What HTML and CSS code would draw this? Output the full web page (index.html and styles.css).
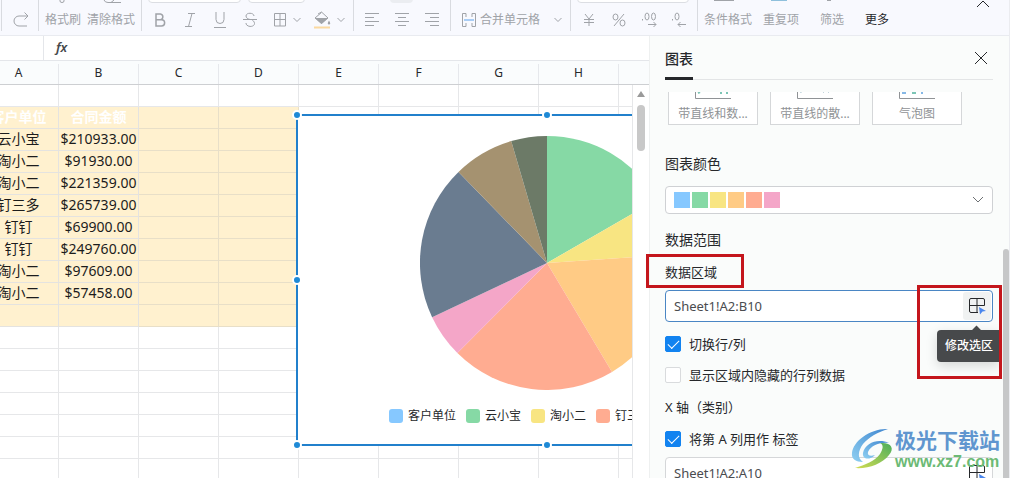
FILE: index.html
```
<!DOCTYPE html>
<html lang="zh-CN">
<head>
<meta charset="utf-8">
<title>图表</title>
<link rel="stylesheet" href="styles.css">
</head>
<body>
<div class="app">
  <header class="toolbar">
    <div class="group group-edge"></div>
    <div class="group group-redo">
      <div class="strip"></div>
      <div class="tools"><button class="tool" aria-label="重做"><svg width="18" height="16" viewBox="0 0 18 16"><path d="M15 14H7A5 5 0 0 1 7 4H16M12.500 .5L16 4L12.500 7.500"/></svg></button></div>
    </div>
    <div class="group group-format">
      <div class="strip strip-icons">
        <svg width="6" height="3" viewBox="0 0 6 3"><path d="M1 0V1A2 1.500 0 0 0 5 1V0"/></svg>
        <svg width="20" height="3" viewBox="0 0 20 3"><path d="M1 0Q2 2.500 5 2.500H18M8 2.500L11 0"/></svg>
      </div>
      <div class="tools labels"><button class="tool">格式刷</button><button class="tool">清除格式</button></div>
    </div>
    <div class="group group-font">
      <div class="strip strip-boxes"><span class="box box-font"></span><span class="box box-size"></span></div>
      <div class="tools">
        <button class="tool slot" aria-label="加粗"><svg width="12" height="14" viewBox="0 0 12 14"><path stroke-width="1.500" d="M2 1H6.500A2.900 2.900 0 0 1 6.500 6.700H2ZM2 6.700H7.500A3.100 3.100 0 0 1 7.500 13H2Z"/></svg></button>
        <button class="tool slot" aria-label="斜体"><svg width="12" height="14" viewBox="0 0 12 14"><path d="M4 .5H11M1 13.500H8M8 .5L4.500 13.500"/></svg></button>
        <button class="tool slot" aria-label="下划线"><svg width="14" height="16" viewBox="0 0 14 16"><path d="M3 0V7.500A4 4 0 0 0 11 7.500V0M1 15.500H13"/></svg></button>
        <button class="tool slot" aria-label="删除线"><svg width="14" height="16" viewBox="0 0 14 16"><path d="M11 4C11 .5 3 .2 3 4C3 6 5 7 7 7.500M0 7.500H14M3 11C3 15.500 11.500 15.500 11.500 11.500C11.500 9.500 10 8.500 8.500 7.500"/></svg></button>
        <button class="tool split" aria-label="边框"><svg width="14" height="14" viewBox="0 0 14 14"><path d="M1.500 .5H12.500V13H1.500ZM1.500 6.500H12.500M7 .5V13"/></svg><svg width="8" height="6" viewBox="0 0 8 6"><path d="M.5 1L4 4.500L7.500 1"/></svg></button>
        <button class="tool split" aria-label="填充颜色"><svg width="18" height="18" viewBox="0 0 18 18"><path d="M5 3L8.500 1L15 7L8.500 12.500L2 7L8.500 1.500"/><path class="solid" d="M2 7H15L8.500 13ZM16 9.500Q18.500 13.500 16 13.500T16 9.500"/><path class="amber" d="M1 16.500H17"/></svg><svg width="8" height="6" viewBox="0 0 8 6"><path d="M.5 1L4 4.500L7.500 1"/></svg></button>
      </div>
    </div>
    <div class="group group-align">
      <div class="strip strip-chip"><span class="chip"></span></div>
      <div class="tools">
        <button class="tool slot" aria-label="左对齐"><svg width="14" height="14" viewBox="0 0 14 14"><path d="M0 .5H14M0 4.500H9M0 8.500H14M0 12.500H9"/></svg></button>
        <button class="tool slot" aria-label="居中"><svg width="14" height="14" viewBox="0 0 14 14"><path d="M0 .5H14M3 4.500H11M0 8.500H14M3 12.500H11"/></svg></button>
        <button class="tool slot" aria-label="右对齐"><svg width="14" height="14" viewBox="0 0 14 14"><path d="M0 .5H14M5 4.500H14M0 8.500H14M5 12.500H14"/></svg></button>
      </div>
    </div>
    <div class="group group-merge">
      <div class="strip"></div>
      <div class="tools"><button class="tool merge"><svg width="14" height="14" viewBox="0 0 14 14"><path d="M4 .5H.5V4M.5 9.500V13.500H4V10M4 .5V4M10 4V.5H13.500V4M13.500 9.500V13.500H10V10M.5 4V10M13.500 4V10"/><path class="azure" d="M2 7H12"/></svg><span>合并单元格</span><svg class="far" width="8" height="6" viewBox="0 0 8 6"><path d="M.5 1L4 4.500L7.500 1"/></svg></button></div>
    </div>
    <div class="group group-number">
      <div class="strip strip-boxes"><span class="box box-number"></span></div>
      <div class="tools">
        <button class="tool slot" aria-label="货币"><svg width="12" height="14" viewBox="0 0 12 14"><path d="M2 1L6 6L10 1M1 6.500H11M1 9.500H11M6 6V13"/></svg></button>
        <button class="tool slot" aria-label="百分比"><svg width="14" height="14" viewBox="0 0 14 14"><path d="M12 1L2 13"/><ellipse cx="3.500" cy="4" rx="2.500" ry="3"/><ellipse cx="10.500" cy="10" rx="2.500" ry="3"/></svg></button>
        <button class="tool slot" aria-label="增加小数位"><svg width="16" height="16" viewBox="0 0 16 16"><ellipse cx="6" cy="4.500" rx="2" ry="3.500"/><ellipse cx="12.500" cy="4.500" rx="2" ry="3.500"/><path d="M1.500 7V8.500M7 12.500H15M12.500 10L15 12.500L12.500 15"/></svg></button>
        <button class="tool slot" aria-label="减少小数位"><svg width="16" height="16" viewBox="0 0 16 16"><ellipse cx="6" cy="4.500" rx="2" ry="3.500"/><path d="M1.500 7V8.500M7 12.500H15M9.500 10L7 12.500L9.500 15"/></svg></button>
      </div>
    </div>
    <div class="group group-more">
      <div class="strip strip-more"><span class="bar"></span><span class="bar bar-blue"></span><span class="bar bar-dot"></span></div>
      <div class="tools"><button class="tool">条件格式</button><button class="tool">重复项</button><button class="tool">筛选</button><button class="tool dark">更多</button></div>
    </div>
    <button class="tool collapse" aria-label="收起"><svg width="14" height="8" viewBox="0 0 14 8"><path d="M1 7L7 1L13 7"/></svg></button>
  </header>

  <div class="workspace">
    <main class="book">
      <div class="formula">
        <span class="namebox"></span>
        <label class="fx" for="formula">fx</label>
        <input id="formula" class="formula-input" type="text">
      </div>
      <div class="colheads"><span>A</span><span>B</span><span>C</span><span>D</span><span>E</span><span>F</span><span>G</span><span>H</span></div>
      <div class="sheet-row">
        <div class="sheet">
          <table class="cells">
            <tbody>
              <tr><td></td><td></td><td></td><td></td><td></td><td></td><td></td><td></td><td></td></tr>
              <tr class="fill head"><td>客户单位</td><td>合同金额</td><td></td><td></td><td></td><td></td><td></td><td></td><td></td></tr>
              <tr class="fill"><td>云小宝</td><td>$210933.00</td><td></td><td></td><td></td><td></td><td></td><td></td><td></td></tr>
              <tr class="fill"><td>淘小二</td><td>$91930.00</td><td></td><td></td><td></td><td></td><td></td><td></td><td></td></tr>
              <tr class="fill"><td>淘小二</td><td>$221359.00</td><td></td><td></td><td></td><td></td><td></td><td></td><td></td></tr>
              <tr class="fill"><td>钉三多</td><td>$265739.00</td><td></td><td></td><td></td><td></td><td></td><td></td><td></td></tr>
              <tr class="fill"><td>钉钉</td><td>$69900.00</td><td></td><td></td><td></td><td></td><td></td><td></td><td></td></tr>
              <tr class="fill"><td>钉钉</td><td>$249760.00</td><td></td><td></td><td></td><td></td><td></td><td></td><td></td></tr>
              <tr class="fill"><td>淘小二</td><td>$97609.00</td><td></td><td></td><td></td><td></td><td></td><td></td><td></td></tr>
              <tr class="fill"><td>淘小二</td><td>$57458.00</td><td></td><td></td><td></td><td></td><td></td><td></td><td></td></tr>
              <tr class="fill"><td></td><td></td><td></td><td></td><td></td><td></td><td></td><td></td><td></td></tr>
              <tr><td></td><td></td><td></td><td></td><td></td><td></td><td></td><td></td><td></td></tr>
              <tr><td></td><td></td><td></td><td></td><td></td><td></td><td></td><td></td><td></td></tr>
              <tr><td></td><td></td><td></td><td></td><td></td><td></td><td></td><td></td><td></td></tr>
              <tr><td></td><td></td><td></td><td></td><td></td><td></td><td></td><td></td><td></td></tr>
              <tr><td></td><td></td><td></td><td></td><td></td><td></td><td></td><td></td><td></td></tr>
              <tr><td></td><td></td><td></td><td></td><td></td><td></td><td></td><td></td><td></td></tr>
              <tr><td></td><td></td><td></td><td></td><td></td><td></td><td></td><td></td><td></td></tr>
            </tbody>
          </table>
          <section class="chart">
            <svg class="pie" width="254" height="254" viewBox="-127 -127 254 254">
              <path fill="#86d9a5" d="M0 0V-127A127 127 0 0 1 110 -63.400Z"/>
              <path fill="#f8e582" d="M0 0L110 -63.400A127 127 0 0 1 126.700 -8.400Z"/>
              <path fill="#ffcb85" d="M0 0L126.700 -8.400A127 127 0 0 1 65 109.100Z"/>
              <path fill="#ffac91" d="M0 0L65 109.100A127 127 0 0 1 -89.600 90Z"/>
              <path fill="#f4a6c8" d="M0 0L-89.600 90A127 127 0 0 1 -114.900 54.200Z"/>
              <path fill="#6a7c90" d="M0 0L-114.900 54.200A127 127 0 0 1 -88.500 -91.100Z"/>
              <path fill="#a59270" d="M0 0L-88.500 -91.100A127 127 0 0 1 -35.800 -121.900Z"/>
              <path fill="#6c7a67" d="M0 0L-35.800 -121.900A127 127 0 0 1 0 -127Z"/>
            </svg>
            <ul class="legend">
              <li><i class="key blue"></i>客户单位</li>
              <li><i class="key green"></i>云小宝</li>
              <li><i class="key yellow"></i>淘小二</li>
              <li><i class="key coral"></i>钉三多</li>
            </ul>
            <i class="handle h-tl"></i><i class="handle h-t"></i><i class="handle h-l"></i><i class="handle h-bl"></i><i class="handle h-b"></i>
          </section>
        </div>
        <div class="scroll"><i class="arrow"></i><i class="thumb"></i></div>
      </div>
    </main>

    <aside class="panel">
      <div class="panel-head">
        <h2 class="tab">图表</h2>
        <button class="close" aria-label="关闭"><svg width="14" height="14" viewBox="0 0 14 14"><path d="M1 1L13 13M13 1L1 13"/></svg></button>
      </div>
      <div class="panel-body">
        <div class="cards">
          <button class="card"><svg width="38" height="8" viewBox="0 0 38 8"><path d="M1.500 0V6.500H37"/><path class="teal" d="M4 1L6 0M26 1H28M32 1H34"/></svg>带直线和数...</button>
          <button class="card"><svg width="38" height="8" viewBox="0 0 38 8"><path d="M1.500 0V6.500H37"/><path class="pale" d="M4 .5L6 0M27 0L28 1M32 0L33 1"/></svg>带直线的散...</button>
          <button class="card"><svg width="38" height="8" viewBox="0 0 38 8"><path d="M1.500 0V6.500H37"/><path class="blue-stroke" d="M4 1H8M23 1H25"/><path class="teal" d="M14 1H18"/></svg>气泡图</button>
        </div>
        <label class="title" for="palette">图表颜色</label>
        <div class="palette">
          <select id="palette" class="palette-select"><option></option></select>
          <span class="swatches"><i class="blue"></i><i class="green"></i><i class="yellow"></i><i class="orange"></i><i class="coral"></i><i class="pink"></i></span>
          <svg class="caret" width="12" height="8" viewBox="0 0 12 8"><path d="M1 1L6 6L11 1"/></svg>
        </div>
        <h3 class="title">数据范围</h3>
        <label class="field-label marked" for="range">数据区域</label>
        <div class="field focus">
          <input id="range" type="text" value="Sheet1!A2:B10">
          <button class="pick on" aria-label="修改选区"><svg width="18" height="18" viewBox="0 0 18 18"><path d="M10 15.500H3A1.500 1.500 0 0 1 1.500 14V3A1.500 1.500 0 0 1 3 1.500H15A1.500 1.500 0 0 1 16.500 3V8.500H1.500M9 1.500V15.500"/><path class="pointer" d="M11 10L18 14L14.500 14.500L12 17.500Z"/></svg></button>
          <div class="tip" role="tooltip">修改选区</div>
          <i class="callout"></i>
        </div>
        <label class="check first"><input type="checkbox" checked>切换行/列</label>
        <label class="check"><input type="checkbox">显示区域内隐藏的行列数据</label>
        <label class="field-label axis" for="axis">X 轴（类别）</label>
        <label class="check axis-check"><input type="checkbox" checked>将第 A 列用作 标签</label>
        <div class="field">
          <input id="axis" type="text" value="Sheet1!A2:A10">
          <button class="pick" aria-label="修改选区"><svg width="18" height="18" viewBox="0 0 18 18"><path d="M10 15.500H3A1.500 1.500 0 0 1 1.500 14V3A1.500 1.500 0 0 1 3 1.500H15A1.500 1.500 0 0 1 16.500 3V8.500H1.500M9 1.500V15.500"/><path class="pointer" d="M11 10L18 14L14.500 14.500L12 17.500Z"/></svg></button>
        </div>
      </div>
      <i class="panel-thumb"></i>
    </aside>
  </div>

  <div class="watermark">
    <svg class="logo" width="44" height="42" viewBox="0 0 44 42">
      <defs>
        <linearGradient id="wb" x1="0" y1="1" x2="1" y2="0"><stop offset="0" stop-color="#8fd0f2"/><stop offset="1" stop-color="#3f86cf"/></linearGradient>
        <linearGradient id="wg" x1="0" y1="1" x2="1" y2="0"><stop offset="0" stop-color="#d3dc52"/><stop offset="1" stop-color="#4cae5c"/></linearGradient>
      </defs>
      <path fill="url(#wb)" d="M37 1C20 0 2 13 1 25C0 31 5 34 12 34C6 30 7 23 12 16C18 9 27 4 37 1Z"/>
      <path fill="url(#wb)" d="M12 25C14 15 27 10 38 15C30 14 20 17 17 24C16 27 19 29 24 27C18 33 11 31 12 25Z"/>
      <path fill="url(#wg)" d="M29 15C40 14 44 20 38 27C31 36 17 41 4 40C14 37 24 33 29 26C32 21 33 17 29 15Z"/>
    </svg>
    <div class="mark-text"><strong>极光下载站</strong><span>www.xz7.com</span></div>
  </div>
</div>
</body>
</html>
```

FILE: styles.css
```
* { box-sizing: border-box; }

body {
  margin: 0;
  font-family: "Noto Sans", "Noto Sans CJK SC", sans-serif;
  font-size: 13px;
  color: #26282b;
  background: #fff;
}

button, input, select { font: inherit; color: inherit; }
button { padding: 0; border: 0; background: none; }
svg { display: block; flex: none; fill: none; stroke: currentColor; }
i { display: block; }

.app {
  position: relative;
  display: flex;
  flex-direction: column;
  height: 100vh;
  overflow: hidden;
  border-right: 1px solid #ebecf0;
}

/* toolbar */
.toolbar {
  display: flex;
  flex: none;
  height: 36px;
  background: #f8f9fe;
  border-bottom: 1px solid #e9ebf0;
  color: #a0a3a8;
  font-size: 12px;
}
.group {
  display: flex;
  flex: none;
  flex-direction: column;
  height: 31px;
  border-right: 1px solid #d9dbe0;
}
.group-edge { width: 2px; }
.group-redo { width: 37px; padding-left: 10px; }
.group-format { width: 103px; padding-left: 6px; }
.group-font { width: 212px; padding-left: 3px; }
.group-align { width: 97px; padding-left: 3px; }
.group-merge { width: 120px; padding-left: 11px; }
.group-number { width: 127px; padding-left: 3px; }
.group-more { padding-left: 6px; border: 0; }
.strip { display: flex; flex: none; height: 3px; overflow: hidden; }
.strip-icons { gap: 38px; padding-left: 14px; }
.strip-boxes { gap: 7px; padding-left: 3px; align-items: flex-end; }
.box {
  flex: none;
  height: 8px;
  background: #fff;
  border: 1px solid #dcdee3;
  border-radius: 4px;
}
.box-font { width: 93px; }
.box-size { width: 57px; }
.box-number { width: 112px; }
.strip-chip { padding-left: 33px; align-items: flex-end; }
.chip { width: 23px; height: 8px; border-radius: 4px; background: #ebedf1; }
.strip-more { gap: 37px; padding-left: 10px; }
.bar { width: 20px; height: 1px; background: #a0a3a8; }
.bar-blue { width: 16px; background: #8fc0dc; }
.bar-dot { width: 4px; margin-left: 3px; }
.tools { display: flex; flex: 1; align-items: center; padding-top: 5px; }
.tool { display: flex; align-items: center; justify-content: center; line-height: 16px; white-space: nowrap; }
.slot { width: 30px; }
.split { gap: 6px; margin-left: 8px; }
.split + .split { margin-left: 12px; }
.labels { gap: 6px; }
.merge { gap: 4px; }
.far { margin-left: 10px; }
.group-more .tools { gap: 11px; }
.group-more .tool + .tool + .tool { margin-left: 10px; }
.dark, .collapse { color: #26282b; }
.collapse { align-items: flex-start; height: 12px; margin-left: auto; margin-right: 19px; }
.solid { fill: #a0a3a8; stroke: none; }
.amber { stroke: #fbd9a0; stroke-width: 2; }
.azure { stroke: #a9cdf5; stroke-width: 2; }

/* workbook */
.workspace { display: flex; flex: 1; min-height: 0; }
.book { display: flex; flex: 1; flex-direction: column; min-width: 0; }
.formula { display: flex; flex: none; height: 25px; border-bottom: 1px solid #e4e6ea; }
.namebox { width: 44px; border-right: 1px solid #e4e6ea; }
.fx { padding-left: 12px; line-height: 22px; font-style: italic; font-weight: 600; color: #46484b; }
.formula-input { flex: 1; min-width: 0; border: 0; outline: 0; background: none; }
.colheads {
  display: flex;
  flex: none;
  height: 24px;
  padding-top: 3px;
  overflow: hidden;
  background: #fafcfd;
  border-bottom: 1px solid #cdcfd2;
}
.colheads span {
  flex: none;
  width: 80px;
  border-right: 1px solid #e6e8ec;
  font-size: 12px;
  line-height: 17px;
  text-align: center;
}
.colheads span:first-child { margin-left: -21px; }
.sheet-row { display: flex; flex: 1; min-height: 0; }
.sheet { position: relative; flex: 1; min-width: 0; overflow: hidden; }
.cells {
  width: 720px;
  margin-left: -21px;
  table-layout: fixed;
  border-collapse: separate;
  border-spacing: 0;
}
.cells td {
  height: 22px;
  padding: 0 0 2px;
  border-right: 1px solid #e6e7e9;
  border-bottom: 1px solid #e6e7e9;
  font-size: 14px;
  line-height: 19px;
  text-align: center;
  white-space: nowrap;
  color: #1c1c1c;
}
.cells .fill td:nth-child(-n+4) { background: #fff1cf; border-color: #e8dfc8; }
.cells .fill td:nth-child(-n+2) { border-color: #e4e3e0; }
.cells .head td { color: #fff; font-weight: 700; }

.chart {
  position: absolute;
  left: 296px;
  top: 29px;
  width: 502px;
  height: 332px;
  padding: 20px 0 0;
  background: #fff;
  border: 2px solid #2180cc;
}
.pie { margin: 0 auto; stroke: none; }
.legend {
  display: flex;
  gap: 10px;
  margin: 16px 0 0;
  padding: 0 0 0 91px;
  list-style: none;
  font-size: 12px;
  line-height: 20px;
}
.legend li { display: flex; align-items: center; gap: 5px; white-space: nowrap; }
.key { width: 14px; height: 14px; border-radius: 3px; }
.handle {
  position: absolute;
  width: 10px;
  height: 10px;
  margin: -5px;
  border: 2px solid #fff;
  border-radius: 50%;
  background: #1f8ad6;
}
.h-tl { left: -1px; top: -1px; }
.h-t { left: 50%; top: -1px; }
.h-l { left: -1px; top: 50%; }
.h-bl { left: -1px; top: calc(100% + 1px); }
.h-b { left: 50%; top: calc(100% + 1px); }

.blue { background: #86c8ff; }
.green { background: #86d9a5; }
.yellow { background: #f8e582; }
.orange { background: #ffcb85; }
.coral { background: #ffac91; }
.pink { background: #f4a6c8; }

.scroll {
  display: flex;
  flex: none;
  flex-direction: column;
  align-items: center;
  gap: 8px;
  width: 17px;
  padding-top: 6px;
  border-left: 1px solid #e6e7e9;
}
.arrow { border: 4px solid transparent; border-top: 0; border-bottom: 6px solid #9a9a9a; }
.thumb { width: 8px; height: 46px; border-radius: 4px; background: #c8c8c8; }

/* chart panel */
.panel {
  position: relative;
  display: flex;
  flex: none;
  flex-direction: column;
  width: 360px;
  padding: 0 16px 0 15px;
  background: #fafcfb;
  border-left: 1px solid #eef0f0;
}
.panel-head {
  display: flex;
  flex: none;
  align-items: flex-end;
  justify-content: space-between;
  height: 44px;
  border-bottom: 1px solid #e3e5e6;
}
.tab {
  height: 35px;
  margin: 0 0 -1px;
  border-bottom: 3px solid #26282b;
  font-size: 14px;
  font-weight: 500;
  line-height: 28px;
}
.close { align-self: center; padding: 0 5px 0 0; }
.panel-body { flex: 1; min-height: 0; margin-top: 12px; }
.cards { display: flex; gap: 12px; padding-left: 3px; }
.card {
  display: flex;
  flex-direction: column;
  align-items: center;
  width: 90px;
  height: 33px;
  border: 1px solid #d5d7d9;
  border-top: 0;
  background: #fff;
  color: #909396;
  font-size: 12px;
  line-height: 28px;
  white-space: nowrap;
}
.teal { stroke: #7cc5b5; stroke-width: 2; }
.pale { stroke: #c3d6dd; }
.blue-stroke { stroke: #86b8e6; stroke-width: 2; }
.title { display: block; margin: 16px 0 12px; font-size: 14px; font-weight: 400; line-height: 20px; }
.cards + .title { margin-top: 29px; }
.palette { position: relative; display: flex; align-items: center; justify-content: space-between; height: 28px; padding: 0 9px 0 9px; }
.palette-select {
  position: absolute;
  inset: 0;
  width: 100%;
  appearance: none;
  border: 1px solid #cfd1d4;
  border-radius: 4px;
  background: #fff;
}
.swatches { position: relative; display: flex; gap: 2px; pointer-events: none; }
.swatches i { width: 16px; height: 16px; }
.caret { position: relative; color: #6d7073; pointer-events: none; }
.field-label { display: block; width: max-content; line-height: 20px; }
.marked { position: relative; margin-bottom: 8px; }
.marked::after {
  content: "";
  position: absolute;
  inset: -8px -27px -6px -19px;
  border: 3px solid #c4161c;
}
.field {
  position: relative;
  display: flex;
  align-items: center;
  height: 32px;
  padding: 0 1px 0 8px;
  border: 1px solid #d5d7d9;
  border-radius: 4px;
  background: #fff;
}
.focus { border-color: #4a86c4; }
.field input { flex: 1; min-width: 0; padding: 0; border: 0; outline: 0; background: none; color: #4a4c4f; }
.pick { display: flex; align-items: center; justify-content: center; width: 28px; height: 28px; border-radius: 3px; }
.on { background: #f0f2f2; }
.pointer { fill: #4a86ee; stroke: none; }
.tip {
  position: absolute;
  top: 39px;
  right: -7px;
  width: 62px;
  height: 32px;
  padding-left: 8px;
  border-radius: 4px 0 0 4px;
  background: #47494b;
  box-shadow: 0 4px 12px rgba(0, 0, 0, .15);
  color: #fff;
  font-size: 12px;
  font-weight: 500;
  line-height: 32px;
  white-space: nowrap;
}
.tip::before {
  content: "";
  position: absolute;
  left: 36px;
  top: -3px;
  width: 7px;
  height: 7px;
  background: #47494b;
  transform: rotate(45deg);
}
.callout {
  position: absolute;
  top: -6px;
  right: -10px;
  width: 85px;
  height: 94px;
  border: 3px solid #c4161c;
}
.check { display: flex; align-items: center; gap: 8px; margin-bottom: 11px; line-height: 20px; }
.first { margin-top: 12px; }
.check input {
  display: grid;
  place-items: center;
  width: 16px;
  height: 16px;
  margin: 0;
  appearance: none;
  border: 1px solid #d9dbdd;
  border-radius: 2px;
  background: #fff;
}
.check input:checked { border-color: #1283f0; background: #1283f0; }
.check input:checked::after {
  content: "";
  width: 10px;
  height: 5px;
  margin-bottom: 3px;
  border: solid #fff;
  border-width: 0 0 1px 1px;
  transform: rotate(-45deg);
}
.axis { margin: 12px 0; }
.axis-check { margin-bottom: 8px; }
.panel-thumb {
  position: absolute;
  top: 213px;
  right: 0;
  bottom: 0;
  width: 6px;
  border-radius: 3px 3px 0 0;
  background: #c6c7c8;
}

/* site mark */
.watermark { position: absolute; right: 9px; bottom: 7px; display: flex; align-items: center; pointer-events: none; }
.logo { stroke: none; }
.mark-text { display: flex; flex-direction: column; width: 105px; }
.mark-text strong { color: #6096cf; font-size: 21px; font-weight: 700; line-height: 26px; }
.mark-text span { color: #6cba75; font-family: "Liberation Sans", Arial, sans-serif; font-size: 16px; font-weight: 700; line-height: 18px; }
```
